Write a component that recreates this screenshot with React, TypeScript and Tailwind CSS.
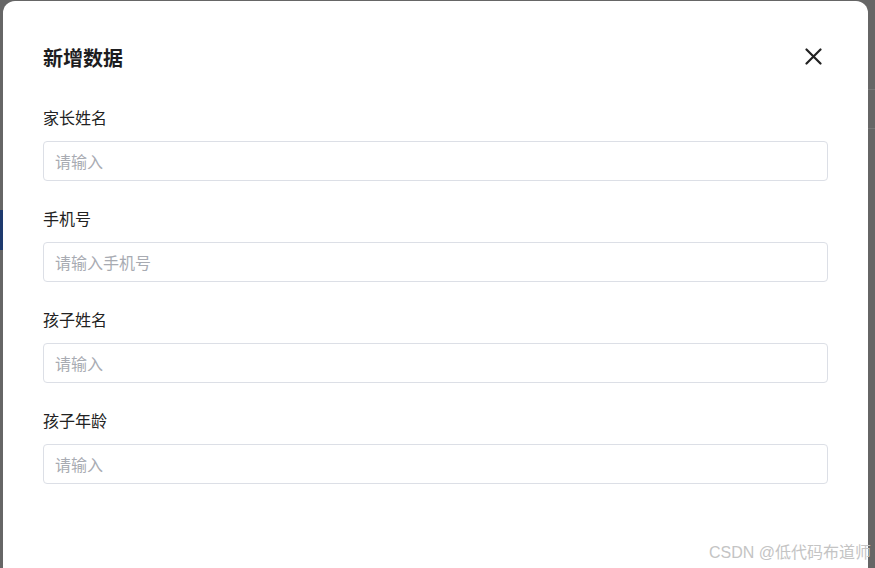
import React from "react";

const fields = [
  { label: "家长姓名", placeholder: "请输入" },
  { label: "手机号", placeholder: "请输入手机号" },
  { label: "孩子姓名", placeholder: "请输入" },
  { label: "孩子年龄", placeholder: "请输入" },
];

export default function App() {
  return (
    <div
      className="relative h-[568px] w-[875px] overflow-hidden bg-[#666666] pl-[3px] pt-[1px]"
      style={{ fontFamily: '"Noto Sans CJK SC", "Noto Sans", sans-serif' }}
    >
      {/* faint page behind the overlay */}
      <div className="absolute left-0 top-[210px] h-[40px] w-[3px] bg-[#1e3a6e]" />
      <div className="absolute right-0 top-[89px] h-px w-[7px] bg-[#777]" />
      <div className="absolute right-0 top-[128px] h-px w-[7px] bg-[#777]" />

      {/* Dialog */}
      <div className="relative h-[600px] w-[865px] rounded-t-[12px] bg-white px-[40px] pt-[43px]">
        <div className="flex h-[28px] items-center justify-between">
          <h2 className="text-[20px] font-bold leading-[28px] text-[#1d1d1f]">新增数据</h2>
          <button type="button" className="-mt-[4px] mr-[1px] flex h-[28px] w-[28px] items-center justify-center text-[#222]">
            <svg width="17" height="17" viewBox="0 0 17 17" fill="none" stroke="currentColor" strokeWidth="2.2" strokeLinecap="round">
              <path d="M1.5 1.5L15.5 15.5M15.5 1.5L1.5 15.5" />
            </svg>
          </button>
        </div>

        <form className="mt-[33px] flex flex-col gap-[25px]">
          {fields.map((f) => (
            <div key={f.label} className="flex flex-col">
              <label className="mb-[12px] text-[16px] leading-[24px] text-[#222]">{f.label}</label>
              <input
                placeholder={f.placeholder}
                className="h-[40px] w-[785px] rounded-[4px] border border-[#dcdfe6] px-[11px] text-[16px] text-[#333] placeholder-[#a8abb2] outline-none"
              />
            </div>
          ))}
        </form>
      </div>

      {/* Watermark */}
      <div
        className="absolute bottom-[4px] right-[4px] text-[16px] leading-[22px] text-[#c4c4c4]"
        style={{ fontFamily: '"Liberation Sans", "Noto Sans CJK SC", sans-serif' }}
      >
        CSDN @低代码布道师
      </div>
    </div>
  );
}
